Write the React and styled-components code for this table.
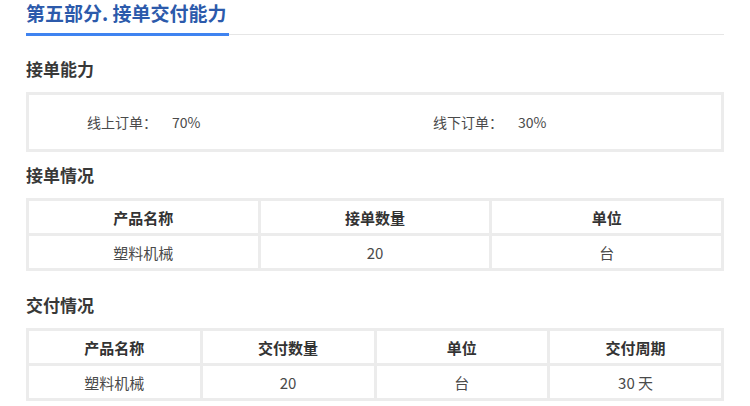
import styled, { createGlobalStyle } from 'styled-components';

const GlobalStyle = createGlobalStyle`
	body {
		margin: 0;
		background: #fff;
		font-family: 'Noto Sans CJK SC', 'Noto Sans', sans-serif;
	}
`;

// Data
const capacity = [
	{ label: '线上订单：', value: '70%' },
	{ label: '线下订单：', value: '30%' },
];

const orderTable = {
	head: ['产品名称', '接单数量', '单位'],
	rows: [['塑料机械', '20', '台']],
};

const deliveryTable = {
	head: ['产品名称', '交付数量', '单位', '交付周期'],
	rows: [['塑料机械', '20', '台', '30 天']],
};

const DataGrid = ({ head, rows }) => (
	<Grid cols={head.length}>
		{head.map((h) => (
			<Cell key={h} head>
				{h}
			</Cell>
		))}
		{rows.map((row, i) =>
			row.map((c, j) => <Cell key={`${i}-${j}`}>{c}</Cell>)
		)}
	</Grid>
);

const App = () => {
	return (
		<>
			<GlobalStyle />
			<Page>
				<PartHeader>
					<PartTitle>第五部分. 接单交付能力</PartTitle>
					<Rule />
				</PartHeader>

				<SubTitle top={21}>接单能力</SubTitle>
				<CapacityBox>
					{capacity.map((c) => (
						<CapacityItem key={c.label}>
							{c.label}
							<span>{c.value}</span>
						</CapacityItem>
					))}
				</CapacityBox>

				<SubTitle top={11}>接单情况</SubTitle>
				<DataGrid {...orderTable} />

				<SubTitle top={22}>交付情况</SubTitle>
				<DataGrid {...deliveryTable} />
			</Page>
		</>
	);
};

const Page = styled.div`
	padding: 0 26px;
	width: 750px;
	box-sizing: border-box;
`;

const PartHeader = styled.div`
	display: flex;
	align-items: flex-end;
`;

const PartTitle = styled.h2`
	margin: 0;
	padding: 0 2px 7px 0;
	font-size: 19px;
	line-height: 26px;
	font-weight: bold;
	color: #2c5aab;
	border-bottom: 3px solid #3f83f0;
	white-space: nowrap;
`;

const Rule = styled.div`
	flex: 1;
	margin-bottom: 1px;
	border-bottom: 1px solid #e6e6e6;
`;

const SubTitle = styled.h3`
	margin: ${(p) => p.top}px 0 11px;
	font-size: 17px;
	line-height: 24px;
	font-weight: bold;
	color: #383838;
`;

const CapacityBox = styled.div`
	display: flex;
	height: 54px;
	border: 3px solid #ececec;
`;

const CapacityItem = styled.div`
	flex: 1;
	display: flex;
	align-items: center;
	padding-left: 58px;
	font-size: 14px;
	color: #4a4a4a;
	span {
		margin-left: 15px;
	}
`;

const Grid = styled.div`
	display: grid;
	grid-template-columns: repeat(${(p) => p.cols}, 1fr);
	gap: 3px;
	padding: 3px;
	background: #ececec;
`;

const Cell = styled.div`
	height: 32px;
	display: flex;
	align-items: center;
	justify-content: center;
	background: #fff;
	font-size: 15px;
	font-weight: ${(p) => (p.head ? 'bold' : 'normal')};
	color: ${(p) => (p.head ? '#333' : '#4a4a4a')};
`;

export default App;
